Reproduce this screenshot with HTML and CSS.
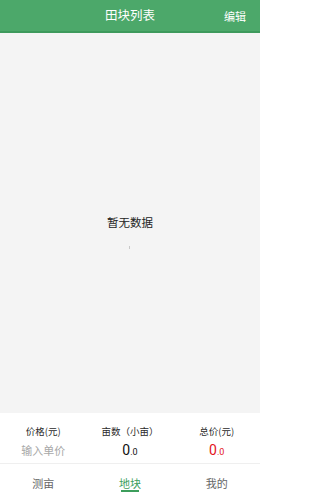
FILE: index.html
```html
<!DOCTYPE html>
<html lang="zh-CN">
<head>
<meta charset="utf-8">
<meta name="viewport" content="width=260">
<title>田块列表</title>
<link rel="stylesheet" href="styles.css">
</head>
<body>
<div class="app">
  <header class="header">
    <div class="title">田块列表</div>
    <div class="edit">编辑</div>
  </header>
  <main class="content">
    <div class="empty">暂无数据</div>
    <div class="tick"></div>
  </main>
  <section class="summary">
    <div class="col">
      <div class="label">价格(元)</div>
      <div class="placeholder">输入单价</div>
    </div>
    <div class="col">
      <div class="label">亩数（小亩）</div>
      <div class="value"><span class="big">0</span><span class="small">.0</span></div>
    </div>
    <div class="col">
      <div class="label">总价(元)</div>
      <div class="value red"><span class="big">0</span><span class="small">.0</span></div>
    </div>
  </section>
  <nav class="tabbar">
    <div class="tab">测亩</div>
    <div class="tab active">地块</div>
    <div class="tab">我的</div>
  </nav>
</div>
</body>
</html>
```

FILE: styles.css
```css
html, body {
  margin: 0;
  padding: 0;
}
body {
  width: 260px;
  height: 500px;
  font-family: "Noto Sans CJK SC", "Noto Sans", sans-serif;
  background: #ffffff;
}
.app {
  display: flex;
  flex-direction: column;
  width: 260px;
  height: 500px;
}
.header {
  position: relative;
  flex: 0 0 31px;
  background: #4ca86a;
  border-bottom: 2px solid #3e9a5c;
  display: flex;
  align-items: center;
  justify-content: center;
  color: #ffffff;
}
.title {
  font-size: 12.5px;
  line-height: 1;
}
.edit {
  position: absolute;
  right: 14px;
  top: 0;
  height: 31px;
  display: flex;
  align-items: center;
  font-size: 11px;
}
.content {
  position: relative;
  flex: 1 1 auto;
  background: #f4f4f4;
  display: flex;
  align-items: center;
  justify-content: center;
}
.empty {
  font-size: 11.5px;
  color: #222222;
  line-height: 1;
}
.tick {
  position: absolute;
  left: 129px;
  top: calc(50% + 23px);
  width: 1px;
  height: 3px;
  background: #c8c8c8;
}
.summary {
  flex: 0 0 50px;
  display: grid;
  grid-template-columns: 1fr 1fr 1fr;
  border-bottom: 1px solid #efefef;
}
.col {
  display: flex;
  flex-direction: column;
  align-items: center;
  padding-top: 12px;
}
.label {
  font-size: 9.5px;
  line-height: 12px;
  color: #2a2a2a;
}
.placeholder {
  margin-top: 6px;
  font-size: 11px;
  line-height: 14px;
  color: #a8a8a8;
}
.value {
  margin-top: 5px;
  line-height: 16px;
  color: #111111;
  font-family: "Roboto", "Noto Sans", sans-serif;
}
.value .big {
  font-size: 14px;
}
.value .small {
  font-size: 9px;
}
.value.red {
  color: #e3141c;
}
.tabbar {
  flex: 0 0 36px;
  display: grid;
  grid-template-columns: 1fr 1fr 1fr;
}
.tab {
  display: flex;
  justify-content: center;
  padding-top: 12px;
  font-size: 11px;
  line-height: 14px;
  color: #666666;
}
.tab.active {
  color: #3d9e5c;
  position: relative;
}
.tab.active::after {
  content: "";
  position: absolute;
  left: 50%;
  margin-left: -9px;
  top: 26px;
  width: 18px;
  height: 2px;
  background: #3d9e5c;
}
```
